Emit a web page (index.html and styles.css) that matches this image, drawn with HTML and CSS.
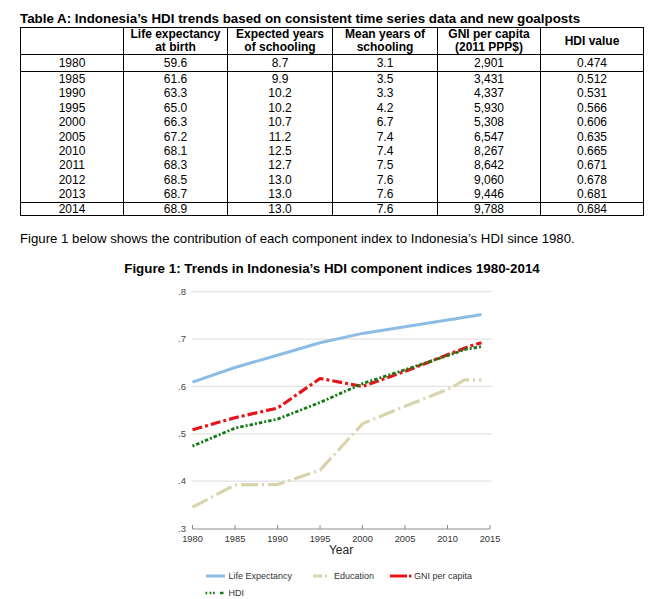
FILE: index.html
```html
<!DOCTYPE html>
<html lang="en">
<head>
<meta charset="utf-8">
<title>Indonesia HDI trends</title>
<link rel="stylesheet" href="styles.css">
</head>
<body>
<div class="doc">
  <h1 class="title">Table A: Indonesia’s HDI trends based on consistent time series data and new goalposts</h1>
  <table class="hdi">
    <colgroup>
      <col class="c1"><col class="c2"><col class="c3"><col class="c4"><col class="c5"><col class="c6">
    </colgroup>
    <thead>
      <tr><th></th><th>Life expectancy<br>at birth</th><th>Expected years<br>of schooling</th><th>Mean years of<br>schooling</th><th>GNI per capita<br>(2011 PPP$)</th><th>HDI value</th></tr>
    </thead>
    <tbody>
      <tr class="row-first"><td>1980</td><td>59.6</td><td>8.7</td><td>3.1</td><td>2,901</td><td>0.474</td></tr>
      <tr><td>1985</td><td>61.6</td><td>9.9</td><td>3.5</td><td>3,431</td><td>0.512</td></tr>
      <tr><td>1990</td><td>63.3</td><td>10.2</td><td>3.3</td><td>4,337</td><td>0.531</td></tr>
      <tr><td>1995</td><td>65.0</td><td>10.2</td><td>4.2</td><td>5,930</td><td>0.566</td></tr>
      <tr><td>2000</td><td>66.3</td><td>10.7</td><td>6.7</td><td>5,308</td><td>0.606</td></tr>
      <tr><td>2005</td><td>67.2</td><td>11.2</td><td>7.4</td><td>6,547</td><td>0.635</td></tr>
      <tr><td>2010</td><td>68.1</td><td>12.5</td><td>7.4</td><td>8,267</td><td>0.665</td></tr>
      <tr><td>2011</td><td>68.3</td><td>12.7</td><td>7.5</td><td>8,642</td><td>0.671</td></tr>
      <tr><td>2012</td><td>68.5</td><td>13.0</td><td>7.6</td><td>9,060</td><td>0.678</td></tr>
      <tr class="row-sep"><td>2013</td><td>68.7</td><td>13.0</td><td>7.6</td><td>9,446</td><td>0.681</td></tr>
      <tr class="row-last"><td>2014</td><td>68.9</td><td>13.0</td><td>7.6</td><td>9,788</td><td>0.684</td></tr>
    </tbody>
  </table>
  <p class="lead">Figure 1 below shows the contribution of each component index to Indonesia’s HDI since 1980.</p>
  <h2 class="fig-title">Figure 1: Trends in Indonesia’s HDI component indices 1980-2014</h2>
</div>
<svg class="chart" width="661" height="323" viewBox="0 276 661 323" xmlns="http://www.w3.org/2000/svg">
  <g class="grid">
    <line x1="191.5" y1="291.7" x2="492" y2="291.7"/>
    <line x1="191.5" y1="339.1" x2="492" y2="339.1"/>
    <line x1="191.5" y1="386.4" x2="492" y2="386.4"/>
    <line x1="191.5" y1="433.8" x2="492" y2="433.8"/>
    <line x1="191.5" y1="481.1" x2="492" y2="481.1"/>
  </g>
  <g class="ylab">
    <text x="186" y="295">.8</text>
    <text x="186" y="342.4">.7</text>
    <text x="186" y="389.7">.6</text>
    <text x="186" y="437.1">.5</text>
    <text x="186" y="484.4">.4</text>
    <text x="186" y="532">.3</text>
  </g>
  <g class="axis">
    <line x1="192.5" y1="529" x2="490" y2="529"/>
    <line x1="192.5" y1="525" x2="192.5" y2="529"/>
    <line x1="235" y1="525" x2="235" y2="529"/>
    <line x1="277.5" y1="525" x2="277.5" y2="529"/>
    <line x1="320" y1="525" x2="320" y2="529"/>
    <line x1="362.5" y1="525" x2="362.5" y2="529"/>
    <line x1="405" y1="525" x2="405" y2="529"/>
    <line x1="447.5" y1="525" x2="447.5" y2="529"/>
    <line x1="490" y1="525" x2="490" y2="529"/>
  </g>
  <g class="xlab">
    <text x="192.5" y="541.5">1980</text>
    <text x="235" y="541.5">1985</text>
    <text x="277.5" y="541.5">1990</text>
    <text x="320" y="541.5">1995</text>
    <text x="362.5" y="541.5">2000</text>
    <text x="405" y="541.5">2005</text>
    <text x="447.5" y="541.5">2010</text>
    <text x="490" y="541.5">2015</text>
  </g>
  <text class="xtitle" x="341" y="553.5">Year</text>

  <polyline class="s-le" points="192.5,382.2 235,367.5 277.5,355.2 320,342.8 362.5,333.4 405,326.7 447.5,320.1 456,318.7 464.5,317.3 473,315.9 481.5,314.4"/>
  <polyline class="s-ed" points="192.5,507.2 235,484.9 277.5,484.5 320,470.2 362.5,423.8 405,406.3 447.5,389.3 456,385 464.5,379.8 473,379.8 481.5,379.8"/>
  <polyline class="s-gni" points="192.5,429.7 235,417.7 277.5,408.1 320,378.5 362.5,386.4 405,371.4 447.5,354.7 456,351.6 464.5,348.2 473,345.2 481.5,342.7"/>
  <polyline class="s-hdi" points="192.5,446.1 235,428.1 277.5,419.1 320,402.5 362.5,383.6 405,369.8 447.5,355.6 456,352.8 464.5,349.5 473,348.1 481.5,346.6"/>

  <g class="legend">
    <line class="lg-le" x1="206" y1="576" x2="225" y2="576"/>
    <text x="228.5" y="579.2">Life Expectancy</text>
    <line class="lg-ed" x1="313" y1="576" x2="322" y2="576"/>
    <line class="lg-ed" x1="325" y1="576" x2="327" y2="576"/>
    <text x="334" y="579.2">Education</text>
    <line class="lg-gni" x1="390" y1="576" x2="407" y2="576"/>
    <line class="lg-gni" x1="409" y1="576" x2="411.5" y2="576"/>
    <text x="414" y="579.2">GNI per capita</text>
    <line class="lg-hdi" x1="205.5" y1="593" x2="216" y2="593"/>
    <line class="lg-hdi-b" x1="220" y1="593" x2="223.5" y2="593"/>
    <text x="228.5" y="596.2">HDI</text>
  </g>
</svg>
</body>
</html>
```
FILE: styles.css
```css
body {
  margin: 0;
  background: #fff;
  color: #000;
  font-family: "Liberation Sans", Arial, sans-serif;
}

.doc {
  padding: 11px 0 0 20px;
  width: 624px;
}

.title {
  margin: 0 0 1px;
  font-size: 13.35px;
  line-height: 15px;
  font-weight: bold;
}

.hdi {
  width: 624px;
  border: 1px solid #000;
  border-spacing: 0;
  table-layout: fixed;
  font-size: 12px;
}

.hdi .c1 { width: 102px; }
.hdi .c2 { width: 104px; }
.hdi .c3 { width: 105px; }
.hdi .c4 { width: 105px; }
.hdi .c5 { width: 103px; }
.hdi .c6 { width: 103px; }

.hdi th,
.hdi td {
  padding: 0;
  text-align: center;
  border-left: 1px solid #000;
}

.hdi th:first-child,
.hdi td:first-child {
  border-left: 0;
}

.hdi th {
  font-weight: bold;
  line-height: 13px;
  border-bottom: 1px solid #000;
  vertical-align: middle;
}

.hdi td {
  line-height: 14.4px;
}

.hdi .row-first td {
  line-height: 16px;
  border-bottom: 1px solid #000;
}

.hdi .row-sep td {
  border-bottom: 1px solid #000;
}

.hdi .row-last td {
  line-height: 12.4px;
}

.lead {
  margin: 15px 0 0;
  font-size: 13.2px;
  line-height: 15px;
}

.fig-title {
  margin: 15px 0 0;
  font-size: 13.35px;
  line-height: 15px;
  font-weight: bold;
  text-align: center;
}

.chart {
  display: block;
  font-family: "Liberation Sans", Arial, sans-serif;
}

.grid line {
  stroke: #e3e3e3;
  stroke-width: 1.2;
}

.ylab text {
  font-size: 9.5px;
  fill: #444;
  text-anchor: end;
}

.axis line {
  stroke: #8c8c8c;
  stroke-width: 1;
}

.xlab text {
  font-size: 9.3px;
  fill: #333;
  text-anchor: middle;
}

.xtitle {
  font-size: 12px;
  fill: #222;
  text-anchor: middle;
}

.s-le,
.s-ed,
.s-gni,
.s-hdi {
  fill: none;
  stroke-linejoin: round;
}

.s-le {
  stroke: #8dbde4;
  stroke-width: 3;
}

.s-ed {
  stroke: #d9d4ae;
  stroke-width: 3.2;
  stroke-dasharray: 17 4 2 4;
}

.s-gni {
  stroke: #e8141b;
  stroke-width: 3.2;
  stroke-dasharray: 10 3 3 3;
}

.s-hdi {
  stroke: #157a15;
  stroke-width: 2.8;
  stroke-dasharray: 2 2 3.5 2;
}

.legend text {
  font-size: 9px;
  fill: #333;
}

.lg-le {
  stroke: #8dbde4;
  stroke-width: 3;
}

.lg-ed {
  stroke: #d9d4ae;
  stroke-width: 3;
}

.lg-gni {
  stroke: #e8141b;
  stroke-width: 3;
}

.lg-hdi {
  stroke: #157a15;
  stroke-width: 2.5;
  stroke-dasharray: 1.7 2.5 1.7 1.6 1.7 20;
}

.lg-hdi-b {
  stroke: #157a15;
  stroke-width: 2.5;
}
```
